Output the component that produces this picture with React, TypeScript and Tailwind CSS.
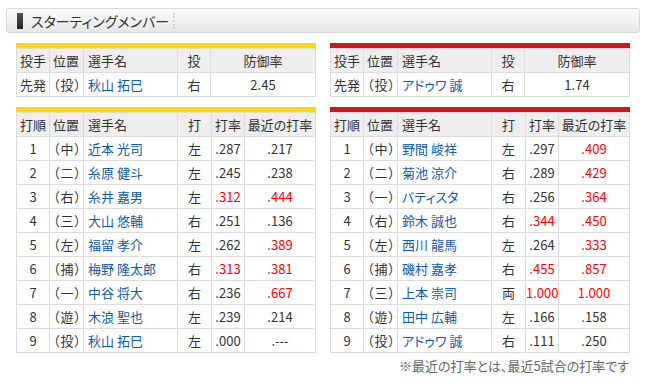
type Batter = {
  no: string
  pos: string
  name: string
  bat: string
  avg: string
  avgHot?: boolean
  recent: string
  recentHot?: boolean
}

type Pitcher = { name: string; hand: string; era: string }

const tigersP: Pitcher = { name: "秋山 拓巳", hand: "右", era: "2.45" }
const carpP: Pitcher = { name: "アドゥワ 誠", hand: "右", era: "1.74" }

const tigers: Batter[] = [
  { no: "1", pos: "（中）", name: "近本 光司", bat: "左", avg: ".287", recent: ".217" },
  { no: "2", pos: "（二）", name: "糸原 健斗", bat: "左", avg: ".245", recent: ".238" },
  { no: "3", pos: "（右）", name: "糸井 嘉男", bat: "左", avg: ".312", avgHot: true, recent: ".444", recentHot: true },
  { no: "4", pos: "（三）", name: "大山 悠輔", bat: "右", avg: ".251", recent: ".136" },
  { no: "5", pos: "（左）", name: "福留 孝介", bat: "左", avg: ".262", recent: ".389", recentHot: true },
  { no: "6", pos: "（捕）", name: "梅野 隆太郎", bat: "右", avg: ".313", avgHot: true, recent: ".381", recentHot: true },
  { no: "7", pos: "（一）", name: "中谷 将大", bat: "右", avg: ".236", recent: ".667", recentHot: true },
  { no: "8", pos: "（遊）", name: "木浪 聖也", bat: "左", avg: ".239", recent: ".214" },
  { no: "9", pos: "（投）", name: "秋山 拓巳", bat: "左", avg: ".000", recent: ".---" },
]

const carp: Batter[] = [
  { no: "1", pos: "（中）", name: "野間 峻祥", bat: "左", avg: ".297", recent: ".409", recentHot: true },
  { no: "2", pos: "（二）", name: "菊池 涼介", bat: "右", avg: ".289", recent: ".429", recentHot: true },
  { no: "3", pos: "（一）", name: "バティスタ", bat: "右", avg: ".256", recent: ".364", recentHot: true },
  { no: "4", pos: "（右）", name: "鈴木 誠也", bat: "右", avg: ".344", avgHot: true, recent: ".450", recentHot: true },
  { no: "5", pos: "（左）", name: "西川 龍馬", bat: "左", avg: ".264", recent: ".333", recentHot: true },
  { no: "6", pos: "（捕）", name: "磯村 嘉孝", bat: "右", avg: ".455", avgHot: true, recent: ".857", recentHot: true },
  { no: "7", pos: "（三）", name: "上本 崇司", bat: "両", avg: "1.000", avgHot: true, recent: "1.000", recentHot: true },
  { no: "8", pos: "（遊）", name: "田中 広輔", bat: "左", avg: ".166", recent: ".158" },
  { no: "9", pos: "（投）", name: "アドゥワ 誠", bat: "右", avg: ".111", recent: ".250" },
]

const th = "border border-[#dcdcdc] bg-[#eeeeee] h-[24px] p-0 font-normal"
const td = "border border-[#dcdcdc] bg-white h-[24px] p-0"

function PitcherTable({ bar, p }: { bar: string; p: Pitcher }) {
  return (
    <div className="w-[300px]">
      <div className={`h-[5px] ${bar}`} />
      <table className="w-[300px] table-fixed border-collapse">
        <colgroup>
          <col className="w-[33px]" />
          <col className="w-[34px]" />
          <col className="w-[94px]" />
          <col className="w-[33px]" />
          <col />
        </colgroup>
        <thead>
          <tr>
            <th className={`${th} text-left pl-[3px]`}>投手</th>
            <th className={`${th} text-left pl-[3px]`}>位置</th>
            <th className={`${th} text-left pl-[4px]`}>選手名</th>
            <th className={`${th} text-center`}>投</th>
            <th className={`${th} text-center`}>防御率</th>
          </tr>
        </thead>
        <tbody>
          <tr>
            <td className={`${td} pl-[3px]`}>先発</td>
            <td className={`${td} pl-[3px] tracking-[1px]`}>（投）</td>
            <td className={`${td} pl-[4px] text-[#0d5ea3]`}>{p.name}</td>
            <td className={`${td} text-center`}>{p.hand}</td>
            <td className={`${td} text-center`}>{p.era}</td>
          </tr>
        </tbody>
      </table>
    </div>
  )
}

function BattingTable({ bar, rows }: { bar: string; rows: Batter[] }) {
  return (
    <div className="w-[300px]">
      <div className={`h-[5px] ${bar}`} />
      <table className="w-[300px] table-fixed border-collapse">
        <colgroup>
          <col className="w-[33px]" />
          <col className="w-[34px]" />
          <col className="w-[94px]" />
          <col className="w-[34px]" />
          <col className="w-[33px]" />
          <col />
        </colgroup>
        <thead>
          <tr>
            <th className={`${th} text-left pl-[3px]`}>打順</th>
            <th className={`${th} text-left pl-[3px]`}>位置</th>
            <th className={`${th} text-left pl-[4px]`}>選手名</th>
            <th className={`${th} text-center`}>打</th>
            <th className={`${th} text-center`}>打率</th>
            <th className={`${th} text-center`}>最近の打率</th>
          </tr>
        </thead>
        <tbody>
          {rows.map((r) => (
            <tr key={r.no}>
              <td className={`${td} text-center`}>{r.no}</td>
              <td className={`${td} pl-[3px] tracking-[1px]`}>{r.pos}</td>
              <td className={`${td} pl-[4px] text-[#0d5ea3] whitespace-nowrap`}>{r.name}</td>
              <td className={`${td} text-center`}>{r.bat}</td>
              <td className={`${td} text-center ${r.avgHot ? "text-[#ff0000]" : ""}`}>{r.avg}</td>
              <td className={`${td} text-center ${r.recentHot ? "text-[#ff0000]" : ""}`}>{r.recent}</td>
            </tr>
          ))}
        </tbody>
      </table>
    </div>
  )
}

export default function App() {
  return (
    <div className="w-[645px] h-[386px] bg-white pt-[8px] text-[13px] leading-none text-[#333] font-['Noto_Sans_CJK_JP',sans-serif] [font-feature-settings:'palt']">
      <div className="ml-[6px] w-[634px] h-[25px] flex items-center rounded-[3px] border border-[#dadada] bg-gradient-to-b from-[#fcfcfc] via-[#f1f1f1] to-[#e7e7e7]">
        <div className="ml-[10px] w-[6px] h-[16px] bg-gradient-to-b from-[#555] to-[#222]" />
        <span className="ml-[8px] text-[14px] text-[#333]">スターティングメンバー</span>
        <div className="ml-[4px] h-[16px] border-l-2 border-dotted border-[#d0d0d0]" />
      </div>

      <div className="ml-[16px] mt-[10px] flex gap-[14px]">
        <PitcherTable bar="bg-[#ffd800]" p={tigersP} />
        <PitcherTable bar="bg-[#d7141c]" p={carpP} />
      </div>

      <div className="ml-[16px] mt-[10px] flex gap-[14px]">
        <BattingTable bar="bg-[#ffd800]" rows={tigers} />
        <div className="flex flex-col">
          <BattingTable bar="bg-[#d7141c]" rows={carp} />
          <div className="mt-[6px] text-right text-[#666] pr-[1px]">※最近の打率とは、最近5試合の打率です</div>
        </div>
      </div>
    </div>
  )
}
